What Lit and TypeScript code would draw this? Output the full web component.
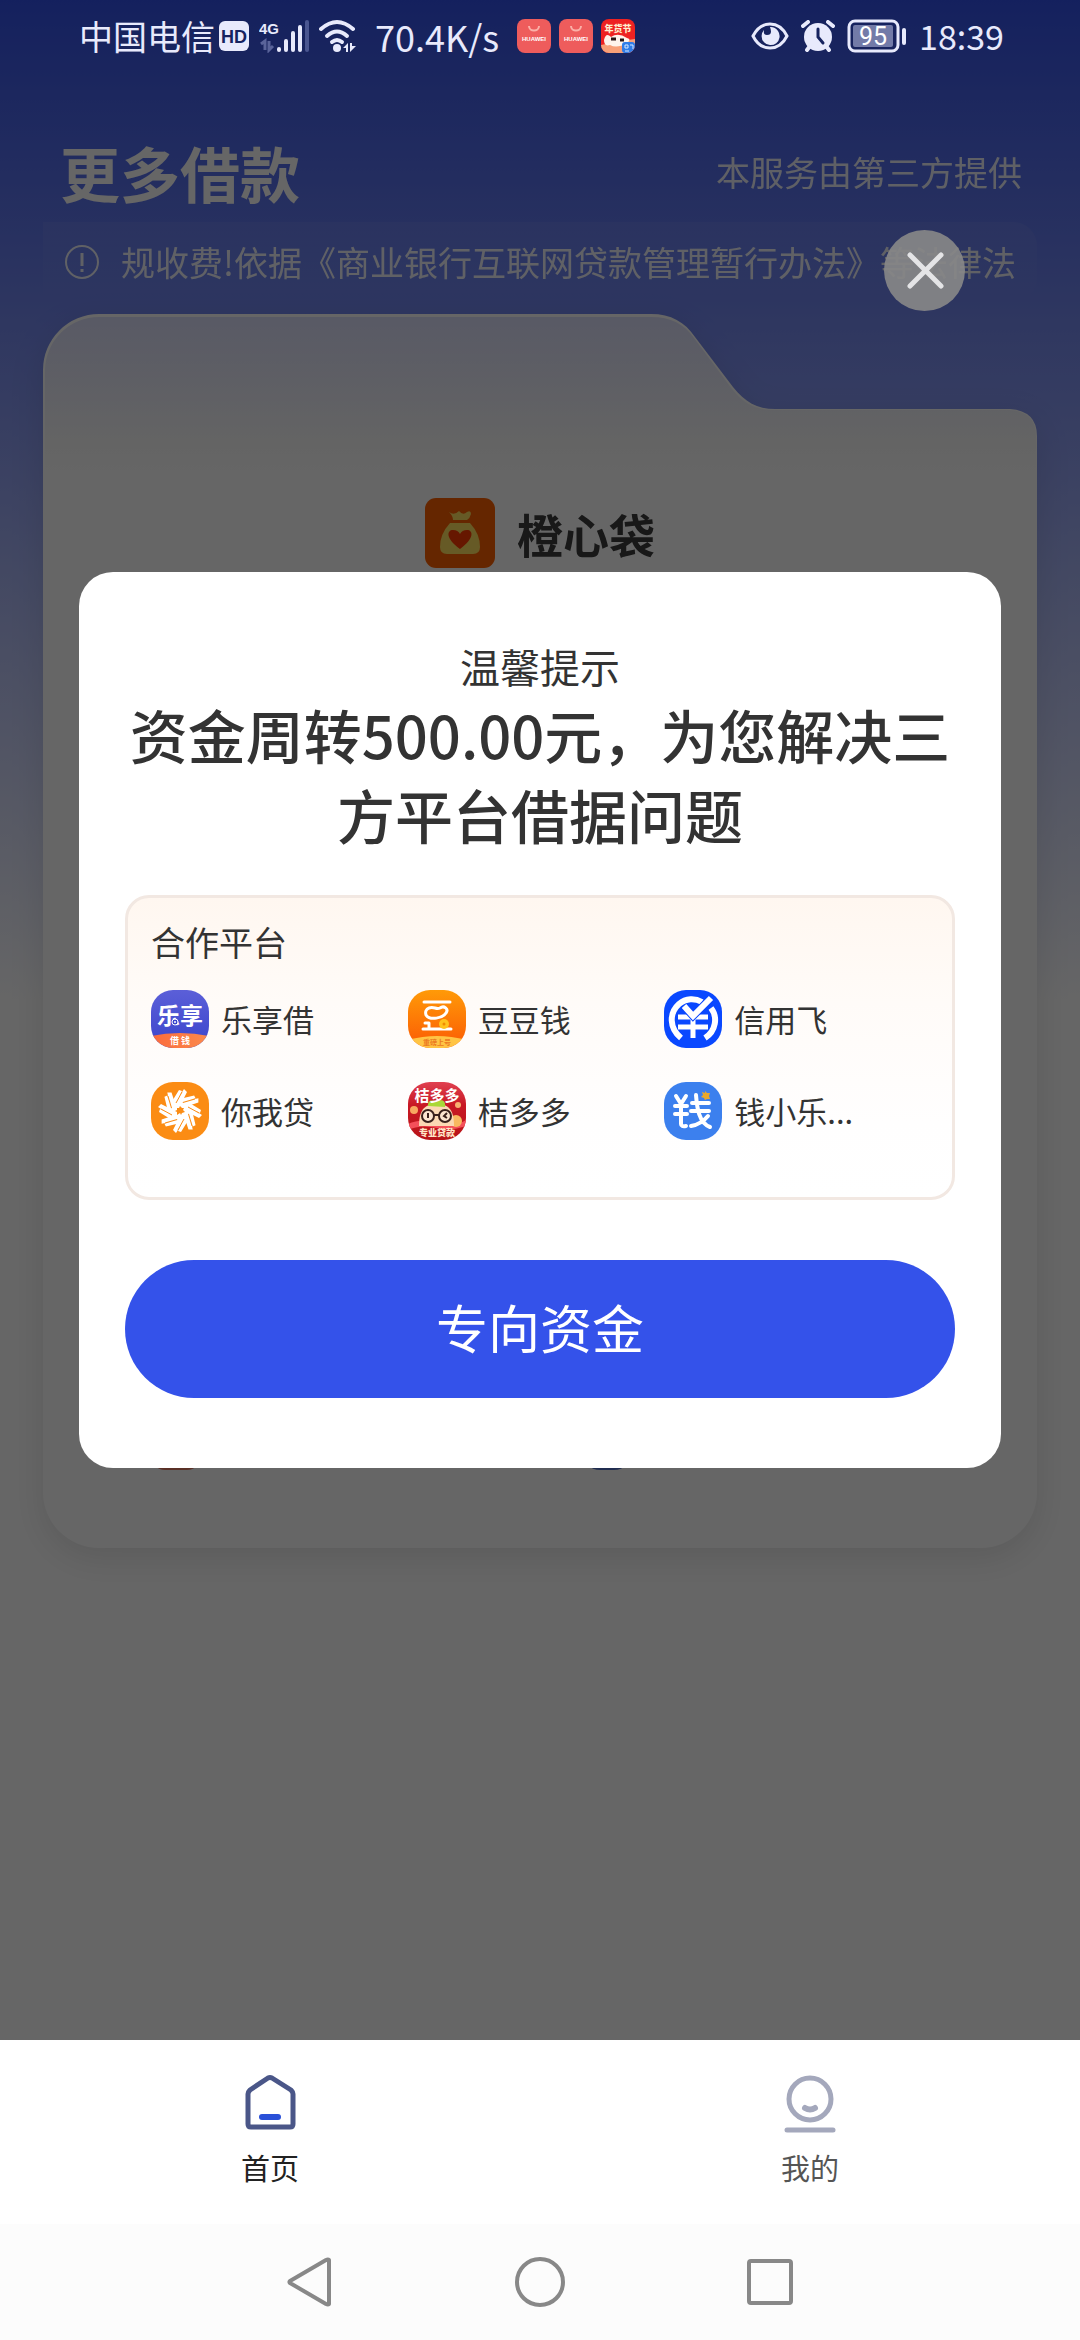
import { LitElement, html, svg, css } from "lit";
import { customElement, property, state } from "lit/decorators.js";

const FONT = css`"Noto Sans CJK SC", "Noto Sans", sans-serif`;

/* ---------- partner logos, drawn on a 58 x 58 grid ---------- */

const lexiang = svg`
  <defs>
    <linearGradient id="lx" x1="0" y1="0" x2="0" y2="1">
      <stop offset="0" stop-color="#5b5fd8" /><stop offset="1" stop-color="#3a44cc" />
    </linearGradient>
    <linearGradient id="lx2" x1="0" y1="0" x2="1" y2="0">
      <stop offset="0" stop-color="#fb6a3c" /><stop offset="1" stop-color="#fb8a4c" />
    </linearGradient>
  </defs>
  <rect width="58" height="58" fill="url(#lx)" />
  <path d="M0 46 Q29 40 58 46 V58 H0z" fill="url(#lx2)" />
  <text x="29" y="34" font-size="23" font-weight="700" text-anchor="middle" fill="#fff">乐享</text>
  <circle cx="24" cy="32" r="3" fill="#3a44cc" stroke="#fff" stroke-width="1" />
  <circle cx="24" cy="32" r="1" fill="#fff" />
  <text x="29" y="54" font-size="9" font-weight="700" text-anchor="middle" fill="#fff">借 钱</text>`;

const doudou = svg`
  <defs>
    <linearGradient id="dd" x1="0" y1="0" x2="0" y2="1">
      <stop offset="0" stop-color="#ff9a08" /><stop offset="1" stop-color="#fb5a04" />
    </linearGradient>
  </defs>
  <rect width="58" height="58" fill="url(#dd)" />
  <path d="M0 50 Q29 42 58 50 V58 H0z" fill="#ffc444" />
  <g fill="none" stroke="#fff" stroke-width="3" stroke-linecap="round" stroke-linejoin="round">
    <path d="M16 12 H42" />
    <path d="M21 18 C26 16 28 20 32 18 C36 15 41 19 38 23 C35 28 22 31 18 25 C17 22 18 19 21 18z" />
    <path d="M15 39 H43" />
    <path d="M17 33 H21 V38" />
  </g>
  <circle cx="36" cy="34" r="5" fill="#ffc21c" />
  <circle cx="36" cy="34" r="1.5" fill="#f08a00" />
  <text x="29" y="55" font-size="7" font-weight="700" text-anchor="middle" fill="#ec7a20">重磅上号</text>`;

const xinyongfei = svg`
  <rect width="58" height="58" fill="#0a48ff" />
  <g fill="none" stroke="#fff" stroke-width="6">
    <path d="M17 48 C5 38 5 23 15 14 C22 8 31 8 38 12" />
    <path d="M47 18 C54 27 52 41 41 48" />
    <path d="M14 27 H44 M14 37 H44 M29 25 V48" stroke-width="5" />
  </g>
  <path d="M20 16 L29 26 L47 8" fill="none" stroke="#0a48ff" stroke-width="8" />
  <path d="M20 16 L29 26 L47 8" fill="none" stroke="#fff" stroke-width="6" />`;

const niwodai = svg`
  <rect width="58" height="58" fill="#fb8c14" />
  <circle cx="29" cy="29" r="13" fill="#fff" />
  ${[0, 45, 90, 135, 180, 225, 270, 315].map(
    (a) => svg`<g transform="rotate(${a} 29 29)">
      <path d="M20 21 L28 8 L31 9 L25 21z M26 18 L33 7 L36 10 L31 20z" fill="#fff" />
      <path d="M25 21 L31 10" stroke="#fb8c14" stroke-width="1" />
    </g>`
  )}
  <path d="M29 24 L31 26 L33 26 L32 28 L34 30 L31 31 L30 33 L29 31 L26 33 L26 30 L24 29 L26 28 L26 26 L28 26z" fill="#fb8c14" />`;

const juduoduo = svg`
  <defs>
    <linearGradient id="jd" x1="0" y1="0" x2="0" y2="1">
      <stop offset="0" stop-color="#e04050" /><stop offset="0.4" stop-color="#c81824" /><stop offset="1" stop-color="#b81418" />
    </linearGradient>
  </defs>
  <rect width="58" height="58" fill="url(#jd)" />
  <path d="M0 42 Q12 36 29 40 Q46 46 58 38 V44 Q40 50 29 46 Q12 42 0 48z" fill="#f4505a" />
  <circle cx="6" cy="28" r="4" fill="#f8a860" />
  <circle cx="48" cy="39" r="6" fill="#f8b860" />
  <circle cx="50" cy="23" r="3" fill="#f8b070" />
  <path d="M11 44 C11 26 18 22 29 22 C40 22 46 27 46 44z" fill="#fbd8b4" />
  <path d="M20 24 C20 17 24 18 29 20 C34 16 38 19 37 25z" fill="#a8d838" />
  <g fill="#fbe4d0" stroke="#38201c" stroke-width="2">
    <circle cx="20" cy="34" r="6" /><circle cx="37" cy="34" r="6" /><path d="M26 33 H31" />
  </g>
  <path d="M20 31 V36 M39 31 L36 34 L39 36" fill="none" stroke="#38201c" stroke-width="2" />
  <text x="29" y="19" font-size="15" font-weight="700" text-anchor="middle" fill="#fff">桔多多</text>
  <text x="29" y="54" font-size="9" font-weight="900" text-anchor="middle" fill="#ffe6c8">专业贷款</text>`;

const qianxiaole = svg`
  <rect width="58" height="58" fill="#3c80ee" />
  <g fill="none" stroke="#fff" stroke-width="4" stroke-linecap="round" stroke-linejoin="round">
    <path d="M12 14 L17 22 L22 14 M11 24 H23 M11 32 H23 M17 22 V42 Q17 45 22 44" />
    <path d="M28 21 H45 M27 29 H45 M32 13 C33 26 35 41 46 45 M44 34 C39 40 33 43 27 44" />
  </g>
  <path d="M41 9 l2 2 l3 0 l-1 3 l1 3 l-3 0 l-2 1 l-1 -2 l-3 -1 l2 -2 l-1 -3 l3 1z" fill="#e8a82c" />`;

const PARTNERS = [
  { name: "乐享借", logo: lexiang },
  { name: "豆豆钱", logo: doudou },
  { name: "信用飞", logo: xinyongfei },
  { name: "你我贷", logo: niwodai },
  { name: "桔多多", logo: juduoduo },
  { name: "钱小乐...", logo: qianxiaole },
];

/* ---------- status bar ---------- */

@customElement("status-bar")
export class StatusBar extends LitElement {
  static styles = css`
    :host {
      display: flex;
      justify-content: space-between;
      align-items: center;
      height: 72px;
      padding: 0 76px 0 79px;
      color: #e8eafc;
      font-family: ${FONT};
      font-size: 34px;
      line-height: 40px;
    }
    .side, .group, .apps { display: flex; align-items: center; }
    .side { gap: 18px; }
    .right { gap: 12px; }
    .group { gap: 10px; }
    .apps { gap: 8px; }
    .carrier { margin-right: -6px; }
    .speed { font-size: 36px; }
    svg { display: block; flex: none; }
    text { font-family: "Liberation Sans", sans-serif; }
    .art { font-family: ${FONT}; }
    .level { font-family: Roboto, sans-serif; }
  `;

  private huawei() {
    return html`<svg width="34" height="34" viewBox="0 0 34 34" aria-hidden="true">
      <rect width="34" height="34" rx="8" fill="#ee5c5c" />
      <path d="M12 7 C12 13 22 13 22 7" fill="none" stroke="#fbb0a8" stroke-width="2" />
      <text x="17" y="22" font-size="6" font-weight="700" text-anchor="middle" fill="#fff">HUAWEI</text>
    </svg>`;
  }

  render() {
    return html`
      <div class="side">
        <div class="group">
          <span class="carrier">中国电信</span>
          <svg width="30" height="30" viewBox="0 0 30 30" aria-hidden="true">
            <rect width="30" height="30" rx="6" fill="#e8eafc" />
            <text x="15" y="22" font-size="18" font-weight="700" text-anchor="middle" fill="#16235f">HD</text>
          </svg>
          <svg width="50" height="34" viewBox="0 0 50 34" aria-hidden="true">
            <text x="0" y="15" font-size="15" font-weight="700" fill="#e8eafc">4G</text>
            <path d="M2 25 L6 22 V31 M10 22 V31 L14 27" fill="none" stroke="#5a649a" stroke-width="3" />
            <g stroke="#e8eafc" stroke-width="4" stroke-linecap="round">
              <path d="M20 30 v1 M27 22 v9 M34 14 v17 M41 8 v23" />
              <path d="M48 3 v28" stroke="#4a5690" />
            </g>
          </svg>
          <svg width="38" height="34" viewBox="0 0 38 34" aria-hidden="true">
            <g fill="none" stroke="#e8eafc" stroke-width="4" stroke-linecap="round">
              <path d="M2 10 Q18 -4 34 10" />
              <path d="M8 17 Q18 8 28 17" />
              <path d="M13 23 Q18 19 23 23" />
            </g>
            <circle cx="18" cy="29" r="4" fill="#e8eafc" />
            <path d="M24 29 l5 -5 v9 h-2 v-4z M31 24 v9 l6 -6 h-4 v-3z" fill="#e8eafc" />
          </svg>
        </div>
        <span class="speed">70.4K/s</span>
        <div class="apps">
          ${this.huawei()}${this.huawei()}
          <svg width="34" height="34" viewBox="0 0 34 34" aria-hidden="true">
            <clipPath id="fest"><rect width="34" height="34" rx="8" /></clipPath>
            <g clip-path="url(#fest)">
              <rect width="34" height="34" fill="#ee2222" />
              <path d="M0 26 L20 22 L34 20 V34 H0z" fill="#f8a078" />
              <path d="M3 21 Q5 13 10 18 Q17 13 26 19 Q31 20 26 24 Q16 30 9 26 Q3 28 3 21z" fill="#fff4ec" />
              <path d="M10 20 h5 M19 21 h4" stroke="#2a1414" stroke-width="3" />
              <text class="art" x="17" y="13" font-size="9" font-weight="900" text-anchor="middle" fill="#fff0d0">年货节</text>
              <rect x="21" y="23" width="13" height="11" rx="3" fill="#2f7ce8" />
              <path d="M24 26 h3 v3 h-3z M29 26 h3 v4 M24 32 h4" fill="none" stroke="#d8e8ff" stroke-width="1" />
            </g>
          </svg>
        </div>
      </div>
      <div class="side right">
        <svg width="38" height="28" viewBox="0 0 38 28" aria-hidden="true">
          <path d="M2 14 C10 -2 28 -2 36 14 C28 30 10 30 2 14z" fill="none" stroke="#e8eafc" stroke-width="3" />
          <path d="M13 8 A9 9 0 1 0 27 9 A9 9 0 0 0 19 5 Q22 13 16 13 Q12 13 13 8z" fill="#e8eafc" />
        </svg>
        <svg width="34" height="32" viewBox="0 0 34 32" aria-hidden="true">
          <circle cx="17" cy="17" r="14" fill="#e8eafc" />
          <path d="M2 6 L7 2 M27 2 L32 6 M6 30 L9 26 M28 30 L25 26" stroke="#e8eafc" stroke-width="4" stroke-linecap="round" />
          <path d="M17 9 V17 L22 23" fill="none" stroke="#16235f" stroke-width="3" stroke-linecap="round" />
        </svg>
        <svg width="60" height="34" viewBox="0 0 60 34" aria-hidden="true">
          <rect x="2" y="2" width="49" height="30" rx="6" fill="none" stroke="#e8eafc" stroke-width="3" />
          <rect x="6" y="6" width="40" height="22" rx="2" fill="#737ba8" />
          <rect x="55" y="9" width="4" height="17" rx="2" fill="#e8eafc" />
          <text class="level" x="26" y="26" font-size="25" text-anchor="middle" fill="#fff">95</text>
        </svg>
        <time>18:39</time>
      </div>
    `;
  }
}

/* ---------- loan card on the page behind the dialog ---------- */

@customElement("loan-card")
export class LoanCard extends LitElement {
  static styles = css`
    :host {
      display: block;
      margin: 12px 43px 0;
      font-family: ${FONT};
      filter: drop-shadow(0 10px 16px rgba(0, 0, 0, 0.1));
    }
    svg { display: block; flex: none; }
    .top { width: 100%; height: 166px; }
    .body {
      display: flex;
      flex-direction: column;
      justify-content: space-between;
      box-sizing: border-box;
      min-height: 1068px;
      padding: 18px 0 78px;
      border-radius: 0 0 56px 56px;
      background: #fff;
    }
    .brand {
      display: flex;
      align-items: center;
      justify-content: center;
      gap: 22px;
    }
    .name {
      margin: 0;
      color: #3c3c3c;
      font-size: 46px;
      font-weight: 700;
      line-height: 70px;
    }
    .marks { display: grid; grid-template-columns: 1fr 1fr; padding: 0 24px 0 108px; }
  `;

  render() {
    return html`
      <svg class="top" viewBox="0 0 994 166" preserveAspectRatio="none" aria-hidden="true">
        <defs>
          <linearGradient id="tab" x1="0" y1="0" x2="0" y2="1">
            <stop offset="0" stop-color="#dde0fc" /><stop offset="0.8" stop-color="#fbfbfb" /><stop offset="1" stop-color="#fff" />
          </linearGradient>
        </defs>
        <path d="M0 166 V56 A56 56 0 0 1 56 0 H608 C628 0 642 8 652 23 L690 73 C702 88 714 95 732 95 H967 Q994 97 994 122 V166z" fill="#fff" />
        <path d="M2 166 V56 A54 54 0 0 1 56 3 H608 C628 3 641 10 651 24 L689 75 C702 91 714 96 732 96 H967 Q993 98 993 122 V166z" fill="url(#tab)" />
      </svg>
      <div class="body">
        <div class="brand">
          <svg width="70" height="70" viewBox="0 0 70 70" aria-hidden="true">
            <rect width="70" height="70" rx="11" fill="#fc6000" />
            <path d="M24 14 Q29 18 34 13 Q38 18 42 14 Q46 12 46 16 Q45 20 42 22 H28 Q28 18 24 14z" fill="#ffe060" />
            <path d="M25 25 H45 Q55 36 55 49 Q55 56 48 56 H22 Q15 56 15 49 Q15 36 25 25z" fill="#ffe060" />
            <path d="M35 51 C20 40 22 32 28 32 Q33 32 35 36 Q37 32 42 32 C48 32 50 40 35 51z" fill="#ff3a00" />
          </svg>
          <h2 class="name">橙心袋</h2>
        </div>
        <div class="marks">
          <svg width="50" height="50" viewBox="0 0 50 50" aria-hidden="true"><rect width="50" height="50" rx="14" fill="#e07860" /></svg>
          <svg width="50" height="50" viewBox="0 0 50 50" aria-hidden="true"><rect width="50" height="50" rx="18" fill="#5070c8" /></svg>
        </div>
      </div>
    `;
  }
}

/* ---------- dialog ---------- */

@customElement("fund-dialog")
export class FundDialog extends LitElement {
  static styles = css`
    :host {
      display: block;
      box-sizing: border-box;
      width: 100%;
      margin: 0 79px;
      padding: 66px 46px 70px;
      border-radius: 34px;
      background: #fff;
      color: #333;
      font-family: ${FONT};
    }
    .tip {
      margin: 0;
      font-size: 40px;
      line-height: 56px;
      text-align: center;
    }
    .title {
      margin: 0 0 41px;
      font-size: 58px;
      font-weight: 500;
      line-height: 80px;
      text-align: center;
    }
    .partners {
      box-sizing: border-box;
      min-height: 305px;
      padding: 20px 31px 20px 23px;
      border: 3px solid #f2e8e2;
      border-radius: 24px;
      background: linear-gradient(#fff7f0, #fffbf8 35%, #fffefe 75%, #fff);
    }
    .heading {
      margin: 0;
      font-size: 34px;
      font-weight: 400;
      line-height: 48px;
    }
    .list {
      display: grid;
      grid-template-columns: repeat(3, 1fr);
      row-gap: 34px;
      margin: 24px 0 0;
      padding: 0;
      list-style: none;
    }
    .item {
      display: flex;
      align-items: center;
      gap: 12px;
      font-size: 31px;
      line-height: 58px;
      white-space: nowrap;
    }
    .logo { display: block; flex: none; border-radius: 22px; font-family: ${FONT}; }
    .go {
      display: block;
      width: 100%;
      height: 138px;
      margin-top: 60px;
      padding: 0 0 4px;
      border: 0;
      border-radius: 69px;
      background: #3452ea;
      color: #fff;
      font-family: inherit;
      font-size: 52px;
      line-height: 72px;
    }
  `;

  render() {
    return html`
      <p class="tip">温馨提示</p>
      <h1 class="title">资金周转500.00元，为您解决三方平台借据问题</h1>
      <section class="partners">
        <h2 class="heading">合作平台</h2>
        <ul class="list">
          ${PARTNERS.map(
            (p) => html`<li class="item">
              <svg class="logo" width="58" height="58" viewBox="0 0 58 58" aria-hidden="true">${p.logo}</svg>
              <span>${p.name}</span>
            </li>`
          )}
        </ul>
      </section>
      <button class="go" type="button">专向资金</button>
    `;
  }
}

/* ---------- bottom bars ---------- */

@customElement("tab-bar")
export class TabBar extends LitElement {
  @property() active = "home";

  static styles = css`
    :host { display: flex; background: #fff; font-family: ${FONT}; }
    .tab {
      display: flex;
      flex: 1;
      flex-direction: column;
      align-items: center;
      gap: 11px;
      height: 152px;
      padding-top: 32px;
      color: #555;
      font-size: 29px;
      line-height: 40px;
      text-decoration: none;
    }
    .tab.on { color: #222; }
    svg { display: block; }
  `;

  render() {
    return html`
      <a class="tab ${this.active === "home" ? "on" : ""}" href="#home">
        <svg width="64" height="64" viewBox="0 0 64 64" fill="none" aria-hidden="true">
          <path d="M10 22 Q10 20 12 18 L30 6 Q32 5 34 6 L53 18 Q55 20 55 22 V52 Q55 55 52 55 H13 Q10 55 10 52z" stroke="#4a5688" stroke-width="5" stroke-linejoin="round" />
          <path d="M24 45 H40" stroke="#2a50d8" stroke-width="6" stroke-linecap="round" />
        </svg>
        首页
      </a>
      <a class="tab ${this.active === "mine" ? "on" : ""}" href="#mine">
        <svg width="64" height="64" viewBox="0 0 64 64" fill="none" stroke="#a4a8bc" stroke-width="5" stroke-linecap="round" aria-hidden="true">
          <circle cx="32" cy="27" r="21" />
          <path d="M27 36 Q32 39 37 36" stroke-width="6" />
          <path d="M9 58 H55" />
        </svg>
        我的
      </a>
    `;
  }
}

@customElement("system-nav")
export class SystemNav extends LitElement {
  static styles = css`
    :host {
      display: flex;
      align-items: center;
      justify-content: center;
      gap: 180px;
      height: 116px;
      background: #fcfcfc;
    }
    .key { padding: 0; border: 0; background: none; }
    svg { display: block; }
  `;

  render() {
    const key = (label: string, shape: unknown) => html`<button class="key" type="button" aria-label=${label}>
      <svg width="50" height="50" viewBox="0 0 50 50" fill="none" stroke="#888" stroke-width="4" stroke-linejoin="round">${shape}</svg>
    </button>`;
    return html`
      ${key("返回", svg`<path d="M44 3 V47 Q43 48 41 47 L5 26 Q4 25 5 24 L41 3 Q43 2 44 3z" />`)}
      ${key("主屏幕", svg`<circle cx="25" cy="25" r="23" />`)}
      ${key("最近任务", svg`<rect x="4" y="4" width="42" height="42" rx="2" />`)}
    `;
  }
}

/* ---------- page ---------- */

@customElement("app-root")
export class AppRoot extends LitElement {
  @state() private open = true;

  static styles = css`
    :host { display: block; font-family: ${FONT}; }
    .screen { display: flex; flex-direction: column; min-height: 100vh; }
    .page {
      position: relative;
      flex: 1;
      background: linear-gradient(#3452ea, #fff 1000px);
    }
    .status { position: relative; z-index: 2; }
    .header {
      display: flex;
      align-items: center;
      justify-content: space-between;
      margin-top: 60px;
      padding: 0 58px 0 60px;
      color: #fff;
    }
    .heading { margin: 0; font-size: 60px; font-weight: 700; line-height: 80px; }
    .source { font-size: 34px; line-height: 48px; opacity: 0.9; }
    .notice {
      display: flex;
      align-items: center;
      gap: 22px;
      height: 80px;
      margin: 10px 43px 0;
      padding: 0 22px;
      border-radius: 0 24px 24px 0;
      background: linear-gradient(rgba(255, 255, 255, 0.06), rgba(255, 255, 255, 0));
      color: #fff;
      font-size: 34px;
      line-height: 48px;
    }
    .notice svg { flex: none; opacity: 0.9; }
    .ticker { flex: 1; overflow: hidden; white-space: nowrap; opacity: 0.9; }
    .mask {
      position: absolute;
      inset: 0;
      display: flex;
      align-items: center;
      background: rgba(0, 0, 0, 0.6);
    }
    .close {
      position: absolute;
      top: 230px;
      right: 115px;
      padding: 0;
      border: 0;
      border-radius: 50%;
      background: rgba(136, 136, 136, 0.9);
    }
    .close svg { display: block; }
  `;

  private dismiss() {
    this.open = false;
  }

  render() {
    return html`
      <div class="screen">
        <main class="page">
          <status-bar class="status"></status-bar>
          <header class="header">
            <h1 class="heading">更多借款</h1>
            <span class="source">本服务由第三方提供</span>
          </header>
          <div class="notice">
            <svg width="34" height="34" viewBox="0 0 34 34" fill="none" stroke="#fff" stroke-width="2" aria-hidden="true">
              <circle cx="17" cy="17" r="16" />
              <path d="M17 8 V21 M17 24 V27" stroke-width="3" />
            </svg>
            <span class="ticker">规收费!依据《商业银行互联网贷款管理暂行办法》等法律法规</span>
          </div>
          <loan-card></loan-card>
          ${this.open
            ? html`<div class="mask">
                <button class="close" type="button" aria-label="关闭" @click=${this.dismiss}>
                  <svg width="81" height="81" viewBox="0 0 81 81" fill="none" stroke="#e4e4e6" stroke-width="5" stroke-linecap="round">
                    <path d="M26 25 L57 56 M57 25 L26 56" />
                  </svg>
                </button>
                <fund-dialog role="dialog" aria-modal="true"></fund-dialog>
              </div>`
            : null}
        </main>
        <tab-bar active="home"></tab-bar>
        <system-nav></system-nav>
      </div>
    `;
  }
}
